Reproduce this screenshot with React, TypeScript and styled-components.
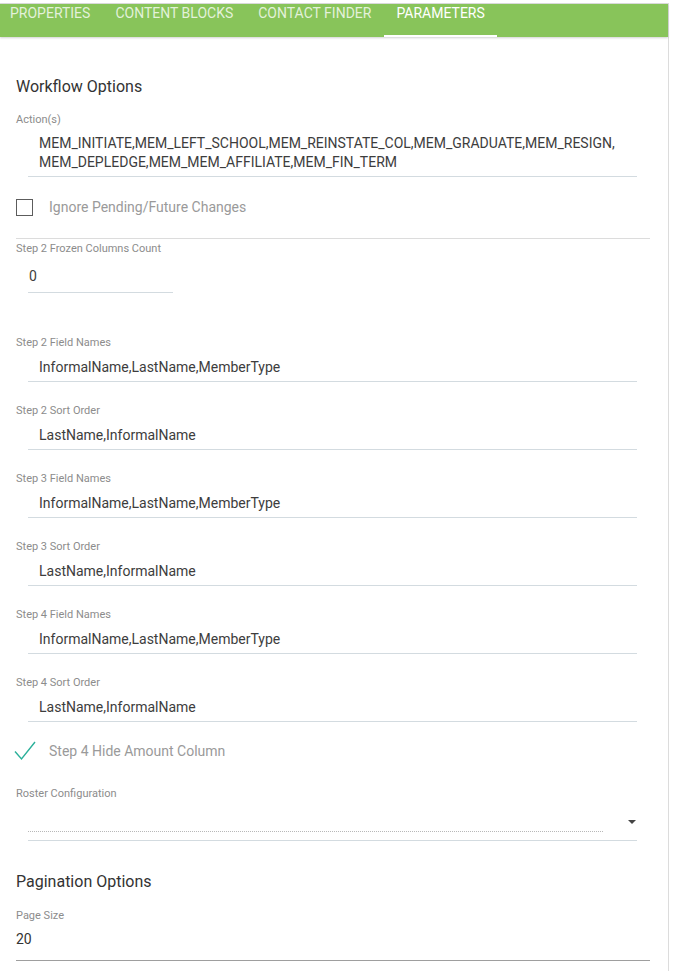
import React from "react"
import styled, { createGlobalStyle } from "styled-components"

const GlobalStyle = createGlobalStyle`
	html, body {
		margin: 0;
		padding: 0;
		background: #fff;
	}
	body {
		font-family: Roboto, "Liberation Sans", Arial, sans-serif;
	}
`

const Page = styled.div`
	padding-top: 3px;
`

const Panel = styled.div`
	width: 669px;
	min-height: 968px;
	border-top: 1px solid #dcdcdc;
	border-right: 1px solid #dcdcdc;
	box-sizing: border-box;
`

const TabBar = styled.div`
	display: flex;
	height: 33px;
	background: #88c45a;
	box-shadow: 0 1px 2px rgba(0, 0, 0, 0.18);
`

const Tab = styled.div<{ $active?: boolean }>`
	box-sizing: border-box;
	height: 33px;
	padding: 0 12px;
	font-size: 14px;
	line-height: 18px;
	text-transform: uppercase;
	color: ${(p) => (p.$active ? "#ffffff" : "rgba(255, 255, 255, 0.78)")};
	border-bottom: 2px solid ${(p) => (p.$active ? "#ffffff" : "transparent")};
	&:first-child {
		margin-left: -2px;
	}
	& + & {
		margin-left: 1px;
	}
`

const Content = styled.div`
	width: 634px;
	padding: 40px 0 0 16px;
`

const SectionTitle = styled.div`
	font-size: 16px;
	line-height: 20px;
	color: #333;
	margin-bottom: 16px;
`

const Label = styled.div`
	font-size: 11px;
	line-height: 14px;
	color: #8c8c8c;
`

const Field = styled.div`
	margin-bottom: 22px;
`

const Value = styled.div<{ $lh?: number }>`
	margin: 7px 13px 0 12px;
	padding: 0 0 4px 11px;
	font-size: 14px;
	line-height: ${(p) => p.$lh ?? 20}px;
	color: #3d3d3d;
	border-bottom: 1px solid #d3dbe0;
`

const ShortValue = styled.div`
	width: 145px;
	margin: 10px 0 0 12px;
	padding: 0 0 6px 1px;
	font-size: 14px;
	line-height: 20px;
	color: #3d3d3d;
	border-bottom: 1px solid #d3dbe0;
	box-sizing: border-box;
`

const Spacer = styled.div<{ $h: number }>`
	height: ${(p) => p.$h}px;
`

const CheckRow = styled.div<{ $divider?: boolean }>`
	display: flex;
	align-items: center;
	gap: 16px;
	margin-top: ${(p) => (p.$divider ? "21px" : "19px")};
	padding-bottom: ${(p) => (p.$divider ? "22px" : "26px")};
	margin-bottom: ${(p) => (p.$divider ? "3px" : "0")};
	border-bottom: ${(p) => (p.$divider ? "1px solid #dcdcdc" : "none")};
	font-size: 14px;
	line-height: 18px;
	color: #9a9a9a;
`

const Box = styled.div`
	width: 17px;
	height: 17px;
	box-sizing: border-box;
	border: 1.5px solid #5c5c5c;
`

const CheckMark = styled.svg`
	width: 22px;
	height: 20px;
	margin-left: -2px;
	margin-right: -3px;
`

const SelectBox = styled.div`
	display: flex;
	margin: 7px 13px 0 12px;
	height: 32px;
	border-bottom: 1px solid #d3dbe0;
`

const SelectInner = styled.div`
	flex: 1;
	height: 23px;
	border-bottom: 1px dotted #b8b8b8;
`

const Arrow = styled.div`
	width: 0;
	height: 0;
	margin: 12px 1px 0 25px;
	border-left: 4px solid transparent;
	border-right: 4px solid transparent;
	border-top: 4px solid #444;
`

const PaginationTitle = styled(SectionTitle)`
	margin-top: 31px;
	margin-bottom: 17px;
`

const PlainValue = styled.div`
	margin-top: 6px;
	padding-bottom: 11px;
	font-size: 14px;
	line-height: 20px;
	color: #333;
	border-bottom: 1px solid #9e9e9e;
`

const tabs = ["Properties", "Content Blocks", "Contact Finder", "Parameters"]

const fields = [
	["Step 2 Field Names", "InformalName,LastName,MemberType"],
	["Step 2 Sort Order", "LastName,InformalName"],
	["Step 3 Field Names", "InformalName,LastName,MemberType"],
	["Step 3 Sort Order", "LastName,InformalName"],
	["Step 4 Field Names", "InformalName,LastName,MemberType"],
	["Step 4 Sort Order", "LastName,InformalName"],
]

export default function App() {
	return (
		<Page>
			<GlobalStyle />
			<Panel>
				<TabBar>
					{tabs.map((t) => (
						<Tab key={t} $active={t === "Parameters"}>
							{t}
						</Tab>
					))}
				</TabBar>
				<Content>
					<SectionTitle>Workflow Options</SectionTitle>
					<Label>Action(s)</Label>
					<Value $lh={19}>
						MEM_INITIATE,MEM_LEFT_SCHOOL,MEM_REINSTATE_COL,MEM_GRADUATE,MEM_RESIGN,
						MEM_DEPLEDGE,MEM_MEM_AFFILIATE,MEM_FIN_TERM
					</Value>
					<CheckRow $divider>
						<Box />
						Ignore Pending/Future Changes
					</CheckRow>
					<Label>Step 2 Frozen Columns Count</Label>
					<ShortValue>0</ShortValue>
					<Spacer $h={43} />
					{fields.map(([label, value]) => (
						<Field key={label}>
							<Label>{label}</Label>
							<Value>{value}</Value>
						</Field>
					))}
					<CheckRow style={{ marginTop: -3 }}>
						<CheckMark viewBox="0 0 22 20">
							<path
								d="M1 10.5 L7.5 18 L21 1"
								fill="none"
								stroke="#2bb09a"
								strokeWidth="1.4"
							/>
						</CheckMark>
						Step 4 Hide Amount Column
					</CheckRow>
					<Label>Roster Configuration</Label>
					<SelectBox>
						<SelectInner />
						<Arrow />
					</SelectBox>
					<PaginationTitle>Pagination Options</PaginationTitle>
					<Label>Page Size</Label>
					<PlainValue>20</PlainValue>
				</Content>
			</Panel>
		</Page>
	)
}
